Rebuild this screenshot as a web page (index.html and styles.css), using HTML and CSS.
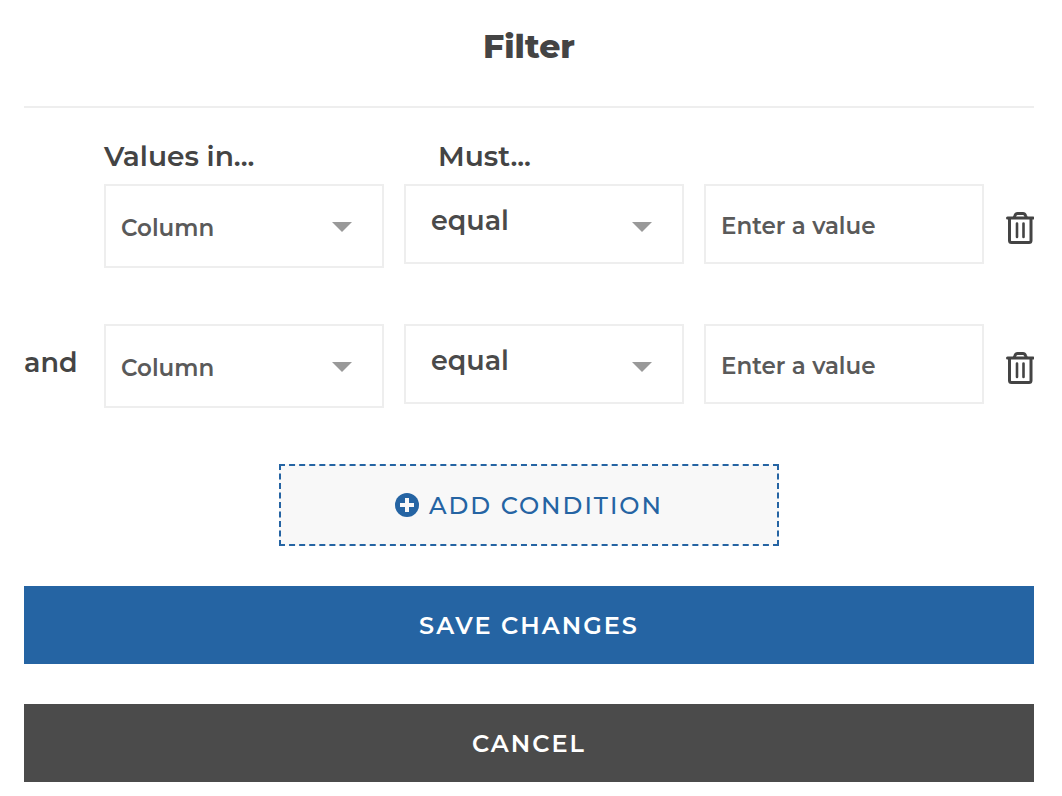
FILE: index.html
```html
<!DOCTYPE html>
<html lang="en">
<head>
<meta charset="utf-8">
<meta name="viewport" content="width=device-width, initial-scale=1">
<title>Filter</title>
<link rel="stylesheet" href="styles.css">
</head>
<body>
<svg class="sprite" aria-hidden="true">
  <symbol id="trash" viewBox="0 0 30 34">
    <g fill="none" stroke="currentColor" stroke-width="3" stroke-linejoin="round">
      <path stroke-linecap="round" d="M3.500 7h25.500"/>
      <path d="M5.500 7v22.500q0 2 2 2h17.500q2 0 2-2V7M10 7l1-2.500Q11.700 2.500 13.500 2.500h5.500q1.800 0 2.500 2L22.500 7"/>
      <path stroke-linecap="round" stroke-width="2.600" d="M13 12.500v13.500M19.500 12.500v13.500"/>
    </g>
  </symbol>
</svg>
<form class="filter">
  <h1 class="title">Filter</h1>
  <div class="conditions">
    <div class="row headings">
      <label class="heading" for="column-1">Values in...</label>
      <label class="heading heading-must" for="operator-1">Must...</label>
    </div>
    <div class="row condition">
      <span class="joiner"></span>
      <div class="picker">
        <select class="field field-column" id="column-1"><option>Column</option></select>
      </div>
      <div class="picker">
        <select class="field field-operator" id="operator-1"><option>equal</option></select>
      </div>
      <input class="field field-value" type="text" placeholder="Enter a value" aria-label="Value">
      <button class="remove" type="button" aria-label="Remove condition"><svg class="trash"><use href="#trash"/></svg></button>
    </div>
    <div class="row condition">
      <span class="joiner">and</span>
      <div class="picker">
        <select class="field field-column" aria-label="Values in"><option>Column</option></select>
      </div>
      <div class="picker">
        <select class="field field-operator" aria-label="Must"><option>equal</option></select>
      </div>
      <input class="field field-value" type="text" placeholder="Enter a value" aria-label="Value">
      <button class="remove" type="button" aria-label="Remove condition"><svg class="trash"><use href="#trash"/></svg></button>
    </div>
  </div>
  <button class="button add" type="button">
    <svg class="plus" viewBox="0 0 24 24" aria-hidden="true"><circle cx="12" cy="12" r="12" fill="currentColor"/><path d="M12 5v14M5 12h14" stroke="#f8f8f8" stroke-width="4"/></svg>
    <span class="add-text">ADD CONDITION</span>
  </button>
  <button class="button save" type="submit">SAVE CHANGES</button>
  <button class="button cancel" type="button">CANCEL</button>
</form>
</body>
</html>
```
FILE: styles.css
```css
* { box-sizing: border-box; }

body {
  margin: 0;
  background: #fff;
  color: #444;
  font-family: Montserrat, Inter, "Liberation Sans", sans-serif;
  font-size: 27px;
  font-weight: 600;
  line-height: 36px;
}

.sprite {
  display: block;
  width: 0;
  height: 0;
}

.filter {
  display: flex;
  flex-direction: column;
  padding: 24px 28px 14px 24px;
}

.title {
  margin: 0;
  padding-bottom: 38px;
  border-bottom: 2px solid #eee;
  font-size: 33px;
  font-weight: 800;
  line-height: 44px;
  text-align: center;
}

.conditions { padding-top: 30px; }

.row {
  display: grid;
  grid-template-columns: 60px repeat(3, minmax(0, 1fr)) 30px;
  column-gap: 20px;
  align-items: start;
}

.headings {
  padding-bottom: 10px;
  font-size: 28px;
}

.heading:first-child { grid-column: 2; }
.heading-must { padding-left: 34px; }

.condition { margin-bottom: 56px; }
.joiner { padding-top: 21px; }
.picker { position: relative; }

.picker::after {
  content: "";
  position: absolute;
  top: 38px;
  right: 32px;
  border: 10px solid transparent;
  border-top-color: #999;
  border-bottom: 0;
  pointer-events: none;
}

.field {
  display: block;
  width: 100%;
  height: 80px;
  margin: 0;
  padding: 4px 15px 0;
  border: 2px solid #eee;
  border-radius: 0;
  background: #fff;
  color: #5a5a5a;
  font: inherit;
  font-size: 23px;
  appearance: none;
}

.field-column { height: 84px; }

.field-operator {
  padding: 0 25px 6px;
  color: #4a4a4a;
  font-size: 27px;
}

.field-value::placeholder {
  color: #5a5a5a;
  opacity: 1;
}

.remove {
  display: flex;
  margin-top: 27px;
  padding: 0;
  border: 0;
  background: none;
  color: #444;
}

.trash {
  width: 30px;
  height: 34px;
}

.button {
  display: flex;
  align-items: center;
  justify-content: center;
  min-height: 78px;
  padding: 2px 20px 0;
  border: 0;
  color: #fff;
  font: inherit;
  font-size: 24px;
  letter-spacing: 2px;
}

.add {
  align-self: center;
  gap: 10px;
  width: 500px;
  max-width: 100%;
  min-height: 82px;
  padding-top: 0;
  border: 2px dashed #2564a3;
  background: #f8f8f8;
  color: #2564a3;
  font-weight: 500;
}

.add-text { padding-top: 2px; }

.plus {
  width: 24px;
  height: 24px;
}

.save {
  margin-top: 40px;
  background: #2564a3;
}

.cancel {
  margin-top: 40px;
  background: #4b4b4b;
}
```
